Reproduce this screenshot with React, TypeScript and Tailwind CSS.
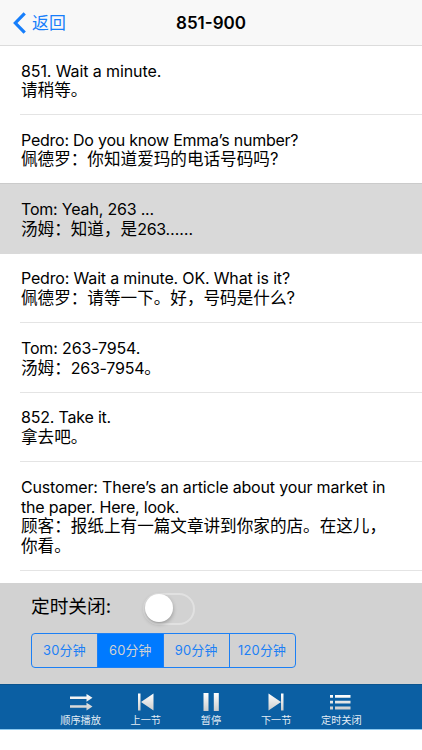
type Line = { text: string; zh?: boolean; spacing?: string };

type Sentence = {
  lines: Line[];
  selected?: boolean;
  height: string;
};

const sentences: Sentence[] = [
  {
    height: "h-[69px] pt-[15.5px]",
    lines: [
      { text: "851. Wait a minute.", spacing: "tracking-[-0.1px]" },
      { text: "请稍等。", zh: true },
    ],
  },
  {
    height: "h-[69px] pt-[15.5px]",
    lines: [
      { text: "Pedro: Do you know Emma’s number?", spacing: "tracking-[-0.24px]" },
      { text: "佩德罗：你知道爱玛的电话号码吗?", zh: true },
    ],
  },
  {
    height: "h-[70px] pt-[16px]",
    selected: true,
    lines: [
      { text: "Tom: Yeah, 263 ...", spacing: "tracking-[-0.19px]" },
      { text: "汤姆：知道，是263……", zh: true },
    ],
  },
  {
    height: "h-[69px] pt-[15px]",
    lines: [
      { text: "Pedro: Wait a minute. OK. What is it?", spacing: "tracking-[-0.17px]" },
      { text: "佩德罗：请等一下。好，号码是什么?", zh: true },
    ],
  },
  {
    height: "h-[70px] pt-[16px]",
    lines: [
      { text: "Tom: 263-7954.", spacing: "tracking-[-0.15px]" },
      { text: "汤姆：263-7954。", zh: true },
    ],
  },
  {
    height: "h-[69px] pt-[15px]",
    lines: [
      { text: "852. Take it.", spacing: "tracking-[-0.2px]" },
      { text: "拿去吧。", zh: true },
    ],
  },
  {
    height: "h-[109px] pt-[16px]",
    lines: [
      {
        text: "Customer: There’s an article about your market in",
        spacing: "tracking-[-0.17px]",
      },
      { text: "the paper. Here, look.", spacing: "tracking-[-0.2px]" },
      { text: "顾客：报纸上有一篇文章讲到你家的店。在这儿，", zh: true },
      { text: "你看。", zh: true },
    ],
  },
];

const timers = ["30分钟", "60分钟", "90分钟", "120分钟"];

function Header() {
  return (
    <header className="relative flex h-[46px] shrink-0 items-center justify-center border-b border-[#dcdcdc] bg-[#f8f8f8]">
      <button className="absolute left-[13px] top-[12px] flex items-center text-[#167efb]">
        <svg width="13" height="22" viewBox="0 0 13 22" fill="none" stroke="#167efb" strokeWidth="3.2">
          <path d="M11.7 1.300 2.300 11l9.400 9.700" />
        </svg>
        <span className="ml-[6px] text-[16.9px] leading-[22px]">返回</span>
      </button>
      <h1 className="text-[17px] font-semibold leading-[22px]">851-900</h1>
    </header>
  );
}

// digits and ellipses inside Chinese text are set a bit tighter
function ChineseText({ text }: { text: string }) {
  const parts = text.split(/([\d-]+…*)/);
  return (
    <>
      {parts.map((part, i) =>
        i % 2 === 1 ? (
          <span key={i} className="text-[16px] tracking-[-0.25px]">
            {part}
          </span>
        ) : (
          part
        )
      )}
    </>
  );
}

function SentenceRow({ sentence }: { sentence: Sentence }) {
  return (
    <li
      className={`shrink-0 ${
        sentence.selected ? "bg-[#d9d9d9] shadow-[0_-1px_0_#cbcbcb]" : ""
      }`}
    >
      <div
        className={`ml-[20px] flex flex-col border-b pl-px ${sentence.height} ${
          sentence.selected ? "border-[#dedede]" : "border-[#e4e4e4]"
        }`}
      >
        {sentence.lines.map((line) => (
          <p
            key={line.text}
            className={`h-[19.5px] whitespace-nowrap leading-[19.5px] ${
              line.zh ? "text-[16.6px]" : "text-[16px]"
            } ${line.spacing ?? ""}`}
          >
            {line.zh ? <ChineseText text={line.text} /> : line.text}
          </p>
        ))}
      </div>
    </li>
  );
}

function TimerPanel() {
  return (
    <section className="h-[101px] shrink-0 bg-[#d2d2d2] pl-[31px] pt-[10px]">
      <div className="flex h-[31px] items-center">
        <span className="-mt-[3px] w-[112px] whitespace-nowrap text-[18.7px] leading-[28px]">定时关闭:</span>
        <div className="flex h-[32px] w-[52px] items-center rounded-full border-2 border-[#e1e1e1]">
          <div className="-mt-px h-[28px] w-[28px] rounded-full bg-white shadow-[0_2px_4px_rgba(0,0,0,0.28)]" />
        </div>
      </div>
      <div className="mt-[9px] flex h-[35px] w-[264.5px] overflow-hidden rounded-[4px] border border-[#1c80f5]">
        {timers.map((label, i) => (
          <button
            key={label}
            className={`flex flex-1 items-center justify-center whitespace-nowrap pt-px text-[12.9px] tracking-[0.2px] ${
              i > 0 ? "border-l border-[#1c80f5]" : ""
            } ${i === 1 ? "bg-[#007aff] text-[#d2d2d2]" : "text-[#1c80f5]"}`}
          >
            {label}
          </button>
        ))}
      </div>
    </section>
  );
}

function OrderIcon() {
  return (
    <svg width="24" height="20" viewBox="0 0 24 20" fill="url(#metal)">
      <path d="M1 4.600h16.500V2L23.500 5.800l-6 3.900V7.100H1zM1 13.300h16.500v-2.600l6 3.800-6 3.900v-2.600H1z" />
    </svg>
  );
}

function PrevIcon() {
  return (
    <svg width="24" height="20" viewBox="0 0 24 20" fill="url(#metal)">
      <path d="M4 1.500h2.500v17H4zM19.500 1.500v17L7 10z" />
    </svg>
  );
}

function PauseIcon() {
  return (
    <svg width="24" height="20" viewBox="0 0 24 20" fill="url(#metal)">
      <path d="M4.500 1h5v18h-5zM14.800 1h5v18h-5z" />
    </svg>
  );
}

function NextIcon() {
  return (
    <svg width="24" height="20" viewBox="0 0 24 20" fill="url(#metal)">
      <path d="M17 1.500h2.500v17H17zM4.500 1.500v17L17 10z" />
    </svg>
  );
}

function ListIcon() {
  return (
    <svg width="24" height="20" viewBox="0 0 24 20" fill="url(#metal)">
      <path d="M1 3h3v2.800H1zM6 3h15.500v2.800H6zM1 8.800h3v2.800H1zM6 8.800h15.500v2.800H6zM1 14.600h3v3H1zM6 14.600h15.500v3H6z" />
    </svg>
  );
}

const actions = [
  { label: "顺序播放", icon: <OrderIcon /> },
  { label: "上一节", icon: <PrevIcon /> },
  { label: "暂停", icon: <PauseIcon /> },
  { label: "下一节", icon: <NextIcon /> },
  { label: "定时关闭", icon: <ListIcon /> },
];

function PlayerBar() {
  return (
    <nav className="flex h-[46px] shrink-0 border-b border-t border-b-[#8bc9f0] border-t-[#0b548e] bg-[#0b5fa3] pl-[48px]">
      <svg width="0" height="0" className="absolute">
        <defs>
          <linearGradient id="metal" x1="0" y1="0" x2="0" y2="1">
            <stop offset="0" stopColor="#ffffff" />
            <stop offset="1" stopColor="#cccccc" />
          </linearGradient>
        </defs>
      </svg>
      {actions.map((action) => (
        <button
          key={action.label}
          className="flex w-[65.2px] flex-col items-center pt-[7px] text-[#e3edf5]"
        >
          {action.icon}
          <span className="mt-px whitespace-nowrap text-[10.2px] leading-[14px]">{action.label}</span>
        </button>
      ))}
    </nav>
  );
}

export default function App() {
  return (
    <div className="flex h-[750px] w-[422px] flex-col overflow-hidden bg-white font-[Inter,'Noto_Sans_CJK_SC',sans-serif] text-black">
      <Header />
      <ul className="flex h-[537px] shrink-0 flex-col overflow-hidden">
        {sentences.map((sentence) => (
          <SentenceRow key={sentence.lines[0].text} sentence={sentence} />
        ))}
      </ul>
      <TimerPanel />
      <PlayerBar />
    </div>
  );
}
